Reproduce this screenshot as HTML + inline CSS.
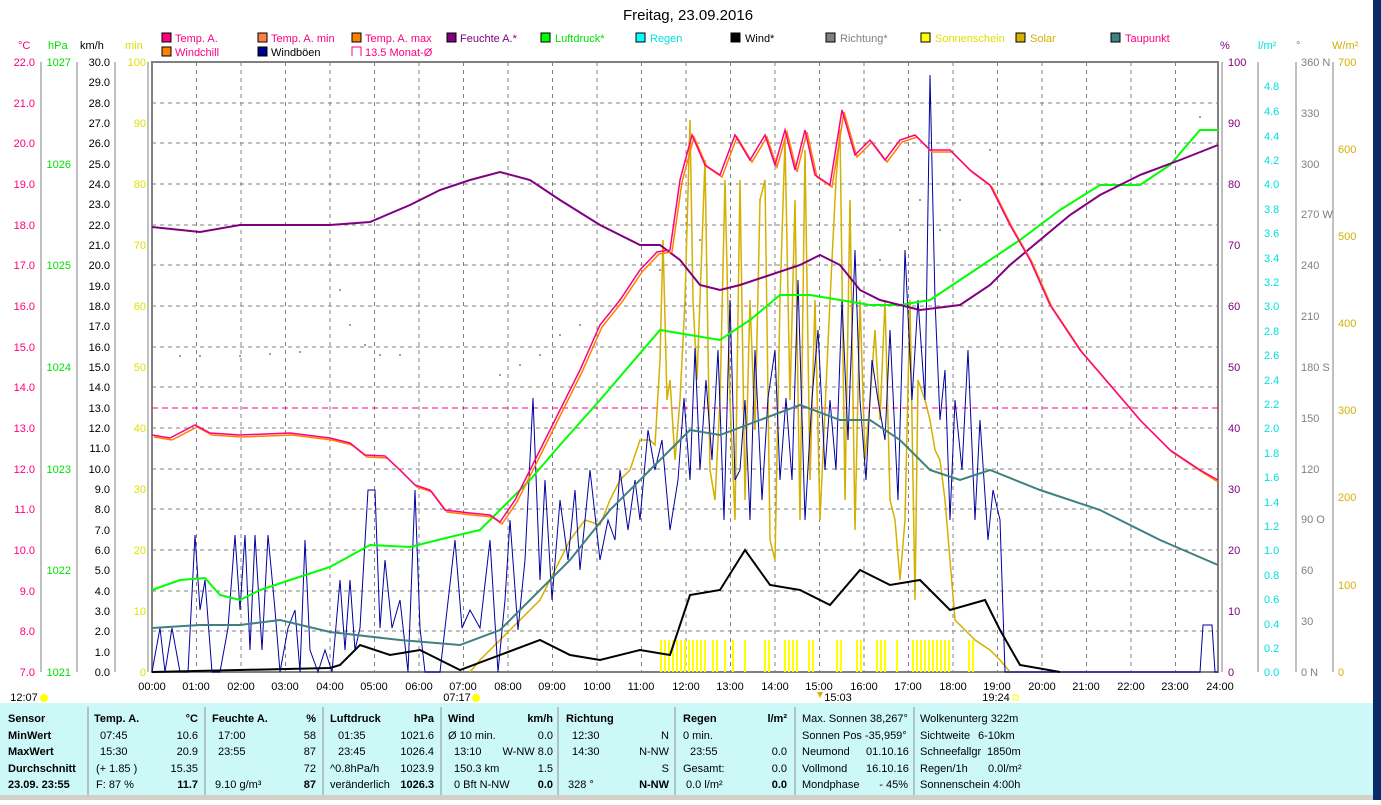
<!DOCTYPE html>
<html><head><meta charset="utf-8"><style>
body{margin:0;width:1381px;height:800px;overflow:hidden;background:#fff;font-family:"Liberation Sans",sans-serif}
svg text{font-family:"Liberation Sans",sans-serif}
</style></head><body>
<svg width="1381" height="800" xmlns="http://www.w3.org/2000/svg" font-size="11">
<rect x="1373" y="0" width="8" height="800" fill="#0a2a6a"/>
<text x="688" y="20" font-size="15" text-anchor="middle" fill="#000">Freitag, 23.09.2016</text>
<!-- legend -->
<g font-size="11">
<rect x="162" y="33" width="9" height="9" fill="#ff0080" stroke="#000"/><text x="175" y="42" fill="#ff0080">Temp. A.</text>
<rect x="258" y="33" width="9" height="9" fill="#ff8040" stroke="#000"/><text x="271" y="42" fill="#ff0080">Temp. A. min</text>
<rect x="352" y="33" width="9" height="9" fill="#ff8000" stroke="#000"/><text x="365" y="42" fill="#ff0080">Temp. A. max</text>
<rect x="447" y="33" width="9" height="9" fill="#800080" stroke="#000"/><text x="460" y="42" fill="#800080">Feuchte A.*</text>
<rect x="541" y="33" width="9" height="9" fill="#00ff00" stroke="#000"/><text x="555" y="42" fill="#00e000">Luftdruck*</text>
<rect x="636" y="33" width="9" height="9" fill="#00ffff" stroke="#000"/><text x="650" y="42" fill="#00e0e0">Regen</text>
<rect x="731" y="33" width="9" height="9" fill="#000" stroke="#000"/><text x="745" y="42" fill="#000">Wind*</text>
<rect x="826" y="33" width="9" height="9" fill="#808080" stroke="#000"/><text x="840" y="42" fill="#808080">Richtung*</text>
<rect x="921" y="33" width="9" height="9" fill="#ffff00" stroke="#000"/><text x="935" y="42" fill="#e0e000">Sonnenschein</text>
<rect x="1016" y="33" width="9" height="9" fill="#d4b000" stroke="#000"/><text x="1030" y="42" fill="#d4b000">Solar</text>
<rect x="1111" y="33" width="9" height="9" fill="#408080" stroke="#000"/><text x="1125" y="42" fill="#ff0080">Taupunkt</text>
<rect x="162" y="47" width="9" height="9" fill="#ff8000" stroke="#000"/><text x="175" y="56" fill="#ff0080">Windchill</text>
<rect x="258" y="47" width="9" height="9" fill="#000090" stroke="#000"/><text x="271" y="56" fill="#000">Windböen</text>
<path d="M352 56V47h9v9" fill="none" stroke="#ff0080"/><text x="365" y="56" fill="#ff0080">13.5 Monat-Ø</text>
</g>
<!-- axis headers -->
<text x="18" y="49" fill="#ff0080">°C</text><text x="48" y="49" fill="#00e000">hPa</text><text x="80" y="49" fill="#000">km/h</text><text x="125" y="49" fill="#e0e000">min</text>
<text x="1220" y="49" fill="#800080">%</text><text x="1258" y="49" fill="#00e0e0">l/m²</text><text x="1296" y="49" fill="#808080">°</text><text x="1332" y="49" fill="#d4b000">W/m²</text>
<!-- grid -->
<g stroke="#808080" stroke-dasharray="4,4" stroke-width="1">
<path d="M196.5 62V672M241 62V672M285.5 62V672M330 62V672M374.5 62V672M419 62V672M463.5 62V672M508 62V672M552.5 62V672M597 62V672M641.5 62V672M686 62V672M730.5 62V672M775 62V672M819.5 62V672M864 62V672M908.5 62V672M953 62V672M997.5 62V672M1042 62V672M1086.5 62V672M1131 62V672M1175.5 62V672"/>
<path d="M152 103H1218M152 143H1218M152 184H1218M152 225H1218M152 265H1218M152 306H1218M152 347H1218M152 387H1218M152 428H1218M152 469H1218M152 509H1218M152 550H1218M152 591H1218M152 631H1218"/>
</g>
<rect x="152" y="62" width="1066" height="610" fill="none" stroke="#808080" stroke-width="2"/>
<!-- left axes -->
<g stroke="#808080" fill="none"><path d="M41 62V672M77 62V672M115 62V672M148 62V672"/></g>
<g font-size="11" text-anchor="end">
<g fill="#ff0080"><text x="35" y="66">22.0</text><text x="35" y="107">21.0</text><text x="35" y="147">20.0</text><text x="35" y="188">19.0</text><text x="35" y="229">18.0</text><text x="35" y="269">17.0</text><text x="35" y="310">16.0</text><text x="35" y="351">15.0</text><text x="35" y="391">14.0</text><text x="35" y="432">13.0</text><text x="35" y="473">12.0</text><text x="35" y="513">11.0</text><text x="35" y="554">10.0</text><text x="35" y="595">9.0</text><text x="35" y="635">8.0</text><text x="35" y="676">7.0</text></g>
<g fill="#00e000"><text x="71" y="66">1027</text><text x="71" y="168">1026</text><text x="71" y="269">1025</text><text x="71" y="371">1024</text><text x="71" y="473">1023</text><text x="71" y="574">1022</text><text x="71" y="676">1021</text></g>
<g fill="#000"><text x="110" y="66">30.0</text><text x="110" y="86">29.0</text><text x="110" y="107">28.0</text><text x="110" y="127">27.0</text><text x="110" y="147">26.0</text><text x="110" y="168">25.0</text><text x="110" y="188">24.0</text><text x="110" y="208">23.0</text><text x="110" y="229">22.0</text><text x="110" y="249">21.0</text><text x="110" y="269">20.0</text><text x="110" y="290">19.0</text><text x="110" y="310">18.0</text><text x="110" y="330">17.0</text><text x="110" y="351">16.0</text><text x="110" y="371">15.0</text><text x="110" y="391">14.0</text><text x="110" y="412">13.0</text><text x="110" y="432">12.0</text><text x="110" y="452">11.0</text><text x="110" y="473">10.0</text><text x="110" y="493">9.0</text><text x="110" y="513">8.0</text><text x="110" y="534">7.0</text><text x="110" y="554">6.0</text><text x="110" y="574">5.0</text><text x="110" y="595">4.0</text><text x="110" y="615">3.0</text><text x="110" y="635">2.0</text><text x="110" y="656">1.0</text><text x="110" y="676">0.0</text></g>
<g fill="#e0e000"><text x="146" y="66">100</text><text x="146" y="127">90</text><text x="146" y="188">80</text><text x="146" y="249">70</text><text x="146" y="310">60</text><text x="146" y="371">50</text><text x="146" y="432">40</text><text x="146" y="493">30</text><text x="146" y="554">20</text><text x="146" y="615">10</text><text x="146" y="676">0</text></g>
</g>
<!-- right axes -->
<g stroke="#808080" fill="none"><path d="M1222 62V672M1258 62V672M1296 62V672M1333 62V672"/></g>
<g font-size="11">
<g fill="#800080"><text x="1228" y="66">100</text><text x="1228" y="127">90</text><text x="1228" y="188">80</text><text x="1228" y="249">70</text><text x="1228" y="310">60</text><text x="1228" y="371">50</text><text x="1228" y="432">40</text><text x="1228" y="493">30</text><text x="1228" y="554">20</text><text x="1228" y="615">10</text><text x="1228" y="676">0</text></g>
<g fill="#00e0e0"><text x="1264" y="90">4.8</text><text x="1264" y="115">4.6</text><text x="1264" y="140">4.4</text><text x="1264" y="164">4.2</text><text x="1264" y="188">4.0</text><text x="1264" y="213">3.8</text><text x="1264" y="237">3.6</text><text x="1264" y="262">3.4</text><text x="1264" y="286">3.2</text><text x="1264" y="310">3.0</text><text x="1264" y="335">2.8</text><text x="1264" y="359">2.6</text><text x="1264" y="384">2.4</text><text x="1264" y="408">2.2</text><text x="1264" y="432">2.0</text><text x="1264" y="457">1.8</text><text x="1264" y="481">1.6</text><text x="1264" y="506">1.4</text><text x="1264" y="530">1.2</text><text x="1264" y="554">1.0</text><text x="1264" y="579">0.8</text><text x="1264" y="603">0.6</text><text x="1264" y="628">0.4</text><text x="1264" y="652">0.2</text><text x="1264" y="676">0.0</text></g>
<g fill="#808080"><text x="1301" y="66">360 N</text><text x="1301" y="117">330</text><text x="1301" y="168">300</text><text x="1301" y="218">270 W</text><text x="1301" y="269">240</text><text x="1301" y="320">210</text><text x="1301" y="371">180 S</text><text x="1301" y="422">150</text><text x="1301" y="473">120</text><text x="1301" y="523">90 O</text><text x="1301" y="574">60</text><text x="1301" y="625">30</text><text x="1301" y="676">0 N</text></g>
<g fill="#d4b000"><text x="1338" y="66">700</text><text x="1338" y="153">600</text><text x="1338" y="240">500</text><text x="1338" y="327">400</text><text x="1338" y="414">300</text><text x="1338" y="501">200</text><text x="1338" y="589">100</text><text x="1338" y="676">0</text></g>
</g>
<!-- x labels -->
<g font-size="11" text-anchor="middle" fill="#000">
<text x="152" y="690">00:00</text><text x="196" y="690">01:00</text><text x="241" y="690">02:00</text><text x="285" y="690">03:00</text><text x="330" y="690">04:00</text><text x="374" y="690">05:00</text><text x="419" y="690">06:00</text><text x="463" y="690">07:00</text><text x="508" y="690">08:00</text><text x="552" y="690">09:00</text><text x="597" y="690">10:00</text><text x="641" y="690">11:00</text><text x="686" y="690">12:00</text><text x="730" y="690">13:00</text><text x="775" y="690">14:00</text><text x="819" y="690">15:00</text><text x="864" y="690">16:00</text><text x="908" y="690">17:00</text><text x="953" y="690">18:00</text><text x="997" y="690">19:00</text><text x="1042" y="690">20:00</text><text x="1086" y="690">21:00</text><text x="1131" y="690">22:00</text><text x="1175" y="690">23:00</text><text x="1220" y="690">24:00</text>
<text x="24" y="701">12:07</text><text x="457" y="701">07:17</text><text x="838" y="701">15:03</text><text x="996" y="701">19:24</text>
</g>
<circle cx="44" cy="698" r="4" fill="#ffff00"/><circle cx="476" cy="698" r="4" fill="#ffff00"/><rect x="1013" y="695" width="5" height="5" fill="none" stroke="#ffff00"/><path d="M817 692l3 6 3-6z" fill="#d4b000"/>
<!-- sunshine bars -->
<g stroke="#ffff00" stroke-width="2"><path d="M661 640V672M665 640V672M669 640V672M673 640V672M677 640V672M681 640V672M685 640V672M689 640V672M693 640V672M697 640V672M701 640V672M705 640V672M713 640V672M717 640V672M725 640V672M733 640V672M745 640V672M765 640V672M769 640V672M785 640V672M789 640V672M793 640V672M797 640V672M809 640V672M813 640V672M837 640V672M841 640V672M857 640V672M861 640V672M877 640V672M881 640V672M885 640V672M897 640V672M913 640V672M917 640V672M921 640V672M925 640V672M929 640V672M933 640V672M937 640V672M941 640V672M945 640V672M949 640V672M969 640V672M973 640V672"/></g>
<!-- monthly avg -->
<path d="M152 408H1218" stroke="#ff0080" stroke-dasharray="6,4" fill="none"/>
<!-- direction dots -->
<g fill="#808080"><circle cx="180" cy="356" r="1"/><circle cx="200" cy="356" r="1"/><circle cx="240" cy="356" r="1"/><circle cx="270" cy="354" r="1"/><circle cx="300" cy="352" r="1"/><circle cx="340" cy="290" r="1"/><circle cx="350" cy="325" r="1"/><circle cx="365" cy="345" r="1"/><circle cx="380" cy="355" r="1"/><circle cx="400" cy="355" r="1"/><circle cx="500" cy="375" r="1"/><circle cx="520" cy="365" r="1"/><circle cx="540" cy="355" r="1"/><circle cx="560" cy="335" r="1"/><circle cx="580" cy="325" r="1"/><circle cx="620" cy="300" r="1"/><circle cx="660" cy="270" r="1"/><circle cx="700" cy="240" r="1"/><circle cx="760" cy="200" r="1"/><circle cx="850" cy="210" r="1"/><circle cx="880" cy="260" r="1"/><circle cx="900" cy="230" r="1"/><circle cx="920" cy="200" r="1"/><circle cx="940" cy="230" r="1"/><circle cx="960" cy="200" r="1"/><circle cx="990" cy="150" r="1"/><circle cx="1200" cy="117" r="1"/></g>
<g fill="none" stroke-width="1.5">
<polyline stroke="#d4b000" points="470,672 480,660 500,640 520,620 540,600 555,570 570,540 585,520 600,525 610,500 620,480 630,470 640,440 650,440 655,445 660,360 663,240 667,400 670,380 675,460 680,400 685,300 690,120 693,300 697,380 700,300 705,160 710,470 715,500 720,400 725,180 730,400 735,520 740,180 745,500 750,300 755,430 760,200 765,180 770,540 775,560 780,300 785,140 790,400 795,200 800,520 805,150 810,480 815,300 820,520 825,410 830,300 836,180 840,130 845,500 850,200 855,530 860,300 865,460 870,400 875,330 880,420 885,300 890,500 895,520 900,580 905,520 910,300 915,600 918,380 925,400 930,420 935,450 940,460 945,500 950,560 955,620 965,630 975,640 990,650 1000,660 1010,672"/>
<polyline stroke="#0000a0" stroke-width="1" points="152,672 160,628 165,672 172,628 180,672 188,672 195,535 200,610 205,580 212,672 220,672 228,628 235,535 240,610 245,535 250,650 255,535 262,650 268,535 275,610 280,672 288,628 295,610 300,672 305,540 310,650 318,672 325,650 332,672 340,580 345,650 350,580 355,650 360,628 368,490 375,490 380,628 385,560 392,628 400,600 408,672 415,490 420,628 425,672 440,672 445,628 455,540 462,628 470,610 480,628 490,540 498,672 505,600 510,520 518,630 525,560 533,398 540,580 545,480 552,600 560,500 568,560 575,490 580,570 590,470 600,560 608,520 615,540 620,470 628,530 635,480 640,520 648,430 655,470 662,440 670,530 678,480 684,398 690,480 695,348 700,470 706,380 712,460 718,350 724,520 730,300 735,480 740,470 745,400 750,520 755,350 762,500 768,398 775,350 780,480 786,398 792,480 798,280 805,520 812,398 818,330 825,470 830,400 836,470 842,300 848,440 855,250 860,400 866,480 872,360 878,400 885,440 890,330 898,500 905,250 912,400 918,300 925,400 930,75 935,300 940,420 945,370 950,520 955,400 962,470 968,350 975,520 980,420 988,540 993,490 1000,520 1005,672 1200,672 1203,625 1212,625 1215,672 1218,672"/>
<polyline stroke="#408080" stroke-width="2" points="152,628 200,625 240,625 280,620 330,632 400,640 460,645 500,630 530,600 570,560 610,510 650,470 690,430 720,435 760,420 800,405 840,420 870,420 900,440 930,470 960,480 990,470 1040,490 1100,510 1160,540 1218,565"/>
<polyline stroke="#000" stroke-width="2" points="152,672 330,668 340,665 360,645 390,655 420,650 460,670 500,655 540,640 570,655 600,660 640,650 670,655 690,595 720,590 745,550 770,585 800,590 830,605 860,570 890,585 920,580 950,610 985,600 1000,630 1020,665 1060,672"/>
<polyline stroke="#00ff00" stroke-width="2" points="152,590 180,580 205,578 220,595 240,600 260,590 290,580 330,567 370,545 410,547 450,537 480,530 500,510 530,480 560,445 600,400 630,365 660,330 690,335 720,340 750,320 780,295 810,295 840,300 870,305 900,305 930,300 960,280 990,260 1020,240 1060,210 1100,185 1140,185 1170,165 1200,130 1218,130"/>
<polyline stroke="#800080" stroke-width="2" points="152,227 200,232 240,225 280,225 330,225 370,222 410,205 440,190 470,180 500,172 530,180 560,200 600,225 640,245 660,245 680,260 700,285 720,290 740,285 770,275 800,265 820,255 840,265 860,290 880,300 900,305 920,310 960,305 990,285 1010,265 1040,240 1070,215 1100,195 1140,175 1180,160 1218,145"/>
<polyline stroke="#ff8000" stroke-width="1.5" transform="translate(2,2)" points="152,435 170,438 195,425 210,433 240,435 290,433 330,438 350,443 365,455 385,456 400,470 415,485 430,490 445,510 470,513 490,515 500,522 515,500 540,450 560,410 580,370 600,325 620,300 640,270 657,252 670,250 680,180 692,135 705,165 720,175 735,135 750,160 765,135 775,165 785,130 795,170 805,130 815,175 830,185 842,110 855,155 870,140 885,160 900,140 915,135 930,150 950,150 970,170 990,185 1010,225 1030,260 1050,305 1080,350 1110,385 1140,420 1170,450 1200,470 1216,480"/>
<polyline stroke="#ff0080" stroke-width="1.5" points="152,435 170,438 195,425 210,433 240,435 290,433 330,438 350,443 365,455 385,456 400,470 415,485 430,490 445,510 470,513 490,515 500,522 515,500 540,450 560,410 580,370 600,325 620,300 640,270 657,252 670,250 680,180 692,135 705,165 720,175 735,135 750,160 765,135 775,165 785,130 795,170 805,130 815,175 830,185 842,110 855,155 870,140 885,160 900,140 915,135 930,150 950,150 970,170 990,185 1010,225 1030,260 1050,305 1080,350 1110,385 1140,420 1170,450 1200,470 1218,480"/>
</g>
<!-- bottom table -->
<rect x="0" y="703" width="1373" height="92" fill="#ccf8f8"/>
<rect x="0" y="795" width="1373" height="5" fill="#d4d0c8"/>
<g stroke="#909090"><path d="M88 707V795M205 707V795M323 707V795M441 707V795M558 707V795M675 707V795M795 707V795"/></g>
<g font-size="11" fill="#000">
<g font-weight="bold"><text x="8" y="722">Sensor</text><text x="8" y="739">MinWert</text><text x="8" y="755">MaxWert</text><text x="8" y="772">Durchschnitt</text><text x="8" y="788">23.09. 23:55</text>
<text x="94" y="722">Temp. A.</text><text x="212" y="722">Feuchte A.</text><text x="330" y="722">Luftdruck</text><text x="448" y="722">Wind</text><text x="566" y="722">Richtung</text><text x="683" y="722">Regen</text></g>
<g text-anchor="end" font-weight="bold"><text x="198" y="722">°C</text><text x="316" y="722">%</text><text x="434" y="722">hPa</text><text x="553" y="722">km/h</text><text x="787" y="722">l/m²</text>
<text x="198" y="788">11.7</text><text x="316" y="788">87</text><text x="434" y="788">1026.3</text><text x="553" y="788">0.0</text><text x="669" y="788">N-NW</text><text x="787" y="788">0.0</text></g>
<text x="100" y="739">07:45</text><text x="100" y="755">15:30</text><text x="96" y="772">(+ 1.85 )</text><text x="96" y="788">F: 87 %</text>
<g text-anchor="end"><text x="198" y="739">10.6</text><text x="198" y="755">20.9</text><text x="198" y="772">15.35</text>
<text x="316" y="739">58</text><text x="316" y="755">87</text><text x="316" y="772">72</text>
<text x="434" y="739">1021.6</text><text x="434" y="755">1026.4</text><text x="434" y="772">1023.9</text>
<text x="553" y="739">0.0</text><text x="553" y="755">W-NW 8.0</text><text x="553" y="772">1.5</text>
<text x="669" y="739">N</text><text x="669" y="755">N-NW</text><text x="669" y="772">S</text>
<text x="787" y="755">0.0</text><text x="787" y="772">0.0</text></g>
<text x="218" y="739">17:00</text><text x="218" y="755">23:55</text><text x="215" y="788">9.10 g/m³</text>
<text x="338" y="739">01:35</text><text x="338" y="755">23:45</text><text x="330" y="772">^0.8hPa/h</text><text x="330" y="788">veränderlich</text>
<text x="448" y="739">Ø 10 min.</text><text x="454" y="755">13:10</text><text x="454" y="772">150.3 km</text><text x="454" y="788">0 Bft N-NW</text>
<text x="572" y="739">12:30</text><text x="572" y="755">14:30</text><text x="568" y="788">328 °</text>
<text x="683" y="739">0 min.</text><text x="690" y="755">23:55</text><text x="683" y="772">Gesamt:</text><text x="686" y="788">0.0 l/m²</text>
<text x="802" y="722">Max. Sonnen 38,267°</text><text x="802" y="739">Sonnen Pos  -35,959°</text><text x="802" y="755">Neumond</text><text x="866" y="755">01.10.16</text><text x="802" y="772">Vollmond</text><text x="866" y="772">16.10.16</text><text x="802" y="788">Mondphase</text><text x="908" y="788" text-anchor="end">- 45%</text>
<text x="920" y="722">Wolkenunterg   322m</text><text x="920" y="739">Sichtweite</text><text x="978" y="739">6-10km</text><text x="920" y="755">Schneefallgr</text><text x="987" y="755">1850m</text><text x="920" y="772">Regen/1h</text><text x="988" y="772">0.0l/m²</text><text x="920" y="788">Sonnenschein  4:00h</text>
</g>
<path d="M914 707V795" stroke="#909090"/>
</svg>
</body></html>
